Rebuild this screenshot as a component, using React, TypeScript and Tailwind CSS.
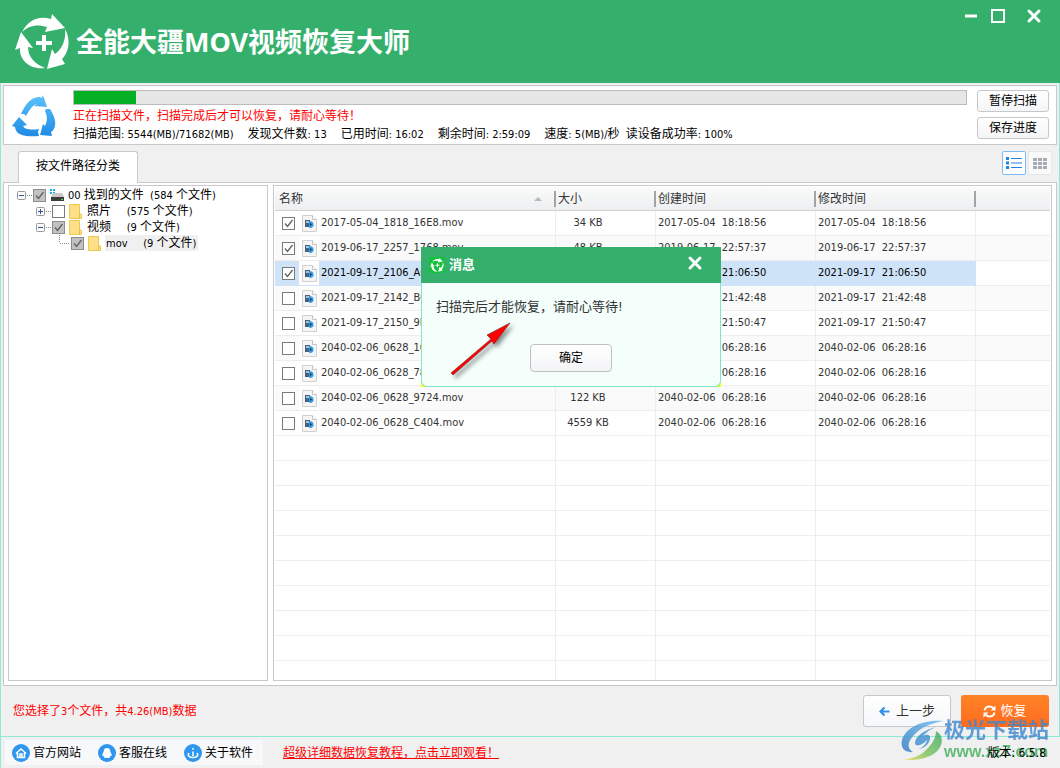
import React, { useState } from "react";
import clsx from "clsx";

type FileRow = {
  name: string;
  size: string;
  created: string;
  modified: string;
  checked: boolean;
  active?: boolean;
};

const files: FileRow[] = [
  { name: "2017-05-04_1818_16E8.mov", size: "34 KB", created: "2017-05-04  18:18:56", modified: "2017-05-04  18:18:56", checked: true },
  { name: "2019-06-17_2257_1768.mov", size: "48 KB", created: "2019-06-17  22:57:37", modified: "2019-06-17  22:57:37", checked: true },
  { name: "2021-09-17_2106_A6D0.mov", size: "4286 KB", created: "2021-09-17  21:06:50", modified: "2021-09-17  21:06:50", checked: true, active: true },
  { name: "2021-09-17_2142_BC20.mov", size: "512 KB", created: "2021-09-17  21:42:48", modified: "2021-09-17  21:42:48", checked: false },
  { name: "2021-09-17_2150_9F14.mov", size: "730 KB", created: "2021-09-17  21:50:47", modified: "2021-09-17  21:50:47", checked: false },
  { name: "2040-02-06_0628_16A4.mov", size: "96 KB", created: "2040-02-06  06:28:16", modified: "2040-02-06  06:28:16", checked: false },
  { name: "2040-02-06_0628_78B2.mov", size: "215 KB", created: "2040-02-06  06:28:16", modified: "2040-02-06  06:28:16", checked: false },
  { name: "2040-02-06_0628_9724.mov", size: "122 KB", created: "2040-02-06  06:28:16", modified: "2040-02-06  06:28:16", checked: false },
  { name: "2040-02-06_0628_C404.mov", size: "4559 KB", created: "2040-02-06  06:28:16", modified: "2040-02-06  06:28:16", checked: false },
];

const emptyRows = Array.from({ length: 10 }, (_, i) => i);

const stats = [
  "扫描范围: 5544(MB)/71682(MB)",
  "发现文件数: 13",
  "已用时间: 16:02",
  "剩余时间: 2:59:09",
  "速度: 5(MB)/秒  读设备成功率: 100%",
];

export default function App() {
  const [open, setOpen] = useState(true);

  return (
    <div className="relative flex h-screen flex-col overflow-hidden bg-[#f0f0f0] font-['DejaVu_Sans_Condensed','Noto_Sans_CJK_SC',sans-serif] text-xs text-black">
      <TitleBar />
      <div className="flex min-h-0 flex-1 flex-col border-x border-[#8ee9d5] px-[2px] pt-[2px]">
        <ScanStatus />
        <Tabs />
        <main className="flex min-h-0 flex-1 gap-[5px] border border-[#c8c8cc] bg-white px-1 pt-[2px] pb-1">
          <FileTree />
          <FileTable />
        </main>
        <ActionBar />
      </div>
      <Footer />
      <Watermark />
      {open && <MessageDialog onClose={() => setOpen(false)} />}
    </div>
  );
}

// Latin runs are set one pixel smaller than the Chinese around them
function Mixed({ text }: { text: string }) {
  return (
    <>
      {text.split(/([\u4e00-\u9fff，！]+)/).map((part, i) =>
        i % 2 === 1 ? (
          part
        ) : (
          <span key={i} className="text-[11px]">
            {part}
          </span>
        )
      )}
    </>
  );
}

function TitleBar() {
  return (
    <header className="flex h-[83px] shrink-0 justify-between bg-[#34b06c] text-white">
      <div className="flex items-center gap-[6px] pl-[14px]">
        <CycleLogo className="size-14" />
        <h1 className="text-[27px] leading-8 font-bold font-['Noto_Sans','Noto_Sans_CJK_SC',sans-serif]">
          全能大疆MOV视频恢复大师
        </h1>
      </div>
      <div className="flex h-8 items-center gap-3 pr-[18px]">
        <button aria-label="最小化">
          <svg className="h-4 w-[14px]" viewBox="0 0 14 16">
            <path d="M1 8h12" stroke="#fff" strokeWidth="3" />
          </svg>
        </button>
        <button aria-label="最大化">
          <svg className="h-4 w-4" viewBox="0 0 16 16" fill="none">
            <path d="M2 2h12v12H2z" stroke="#fff" strokeWidth="2" />
          </svg>
        </button>
        <button aria-label="关闭" className="ml-2">
          <Cross className="size-4" />
        </button>
      </div>
    </header>
  );
}

function ScanStatus() {
  return (
    <section className="flex h-[60px] shrink-0 border border-[#c8c8cc] bg-white">
      <div className="w-[69px] shrink-0 pt-2 pl-2">
        <RecycleIcon />
      </div>
      <div className="min-w-0 flex-1 pt-1">
        <div
          role="progressbar"
          aria-label="扫描进度"
          aria-valuenow={7}
          className="h-[15px] border border-[#bcbcbc] bg-[#e6e6e6]"
        >
          <div className="h-full bg-[#06b025]" style={{ width: "6.9%" }} />
        </div>
        <p className="mt-[3px] leading-[17px] text-[#f00]">
          正在扫描文件，扫描完成后才可以恢复，请耐心等待！
        </p>
        <div className="flex gap-[14px] leading-[18px] whitespace-pre">
          {stats.map((item) => (
            <span key={item}>
              <Mixed text={item} />
            </span>
          ))}
        </div>
      </div>
      <div className="flex w-[89px] shrink-0 flex-col gap-[5px] pt-1 pr-[7px] pl-[10px]">
        <SmallButton>暂停扫描</SmallButton>
        <SmallButton>保存进度</SmallButton>
      </div>
    </section>
  );
}

function SmallButton({ children }: { children: React.ReactNode }) {
  return (
    <button className="h-[22px] rounded-[3px] border border-[#c8c8cc] bg-linear-to-b from-white to-[#f4f5f7] leading-5">
      {children}
    </button>
  );
}

function Tabs() {
  return (
    <div className="flex h-[37px] shrink-0 items-end justify-between pl-[15px]">
      <button className="relative -mb-px h-8 w-[120px] rounded-t-[3px] border border-b-0 border-[#c8c8cc] bg-white pb-1">
        按文件路径分类
      </button>
      <div className="mb-[7px] flex gap-[2px] pr-[5px]">
        <button aria-label="列表" className="grid size-6 place-items-center rounded-xs border border-[#7cbcf5] bg-white">
          <svg className="h-3 w-4" viewBox="0 0 16 12">
            <g fill="#1f86e0">
              <path d="M0 0h3v3H0zM0 4.5h3v3H0zM0 9h3v3H0z" />
              <path d="M5 1h11v1H5zM5 5.5h11v1H5zM5 10h11v1H5z" />
            </g>
          </svg>
        </button>
        <button aria-label="图标" className="grid size-6 place-items-center rounded-xs border border-[#e8e8ea] bg-[#fafafa]">
          <svg className="h-[11px] w-[14px]" viewBox="0 0 14 11">
            <path fill="#a6aab4" d="M0 0h4v3H0zM5 0h4v3H5zM10 0h4v3h-4zM0 4h4v3H0zM5 4h4v3H5zM10 4h4v3h-4zM0 8h4v3H0zM5 8h4v3H5zM10 8h4v3h-4z" />
          </svg>
        </button>
      </div>
    </div>
  );
}

function FileTree() {
  return (
    <aside className="w-[260px] shrink-0 border border-[#c8c8cc] bg-white pt-px pl-2">
      <ul className="leading-4 whitespace-pre">
        <TreeRow expander="minus" checked icon={<DriveIcon />} label="00 找到的文件  (584 个文件)" />
        <li className="pl-[19px]">
          <ul>
            <TreeRow expander="plus" icon={<FolderIcon />} label="照片     (575 个文件)" />
            <TreeRow expander="minus" checked icon={<FolderIcon />} label="视频     (9 个文件)" />
            <li className="pl-[19px]">
              <ul>
                <TreeRow checked selected icon={<FolderIcon />} label="mov     (9 个文件)" />
              </ul>
            </li>
          </ul>
        </li>
      </ul>
    </aside>
  );
}

type TreeRowProps = {
  expander?: "plus" | "minus";
  checked?: boolean;
  selected?: boolean;
  icon: React.ReactNode;
  label: string;
};

function TreeRow({ expander, checked, selected, icon, label }: TreeRowProps) {
  return (
    <li className="flex h-4 items-center">
      {expander ? (
        <button aria-label={expander === "plus" ? "展开" : "折叠"} className="mr-px flex w-[15px] items-center">
          <svg className="h-[9px] w-[15px]" viewBox="0 0 15 9" fill="none">
            <rect x=".5" y=".5" width="8" height="8" rx="1" fill="#fafafa" stroke="#999" />
            <path d="M2 4.5h5" stroke="#36549c" />
            {expander === "plus" && <path d="M4.5 2v5" stroke="#36549c" />}
            <path d="M10 4.5h5" stroke="#888" strokeDasharray="1 1" />
          </svg>
        </button>
      ) : (
        <svg className="mr-px h-4 w-[15px]" viewBox="0 0 15 16" fill="none">
          <path d="M4.5 0v8M5 8.5h10" stroke="#888" strokeDasharray="1 1" />
        </svg>
      )}
      <label className="flex h-4 items-center">
        <CheckBox defaultChecked={checked} filled />
        <span className="flex w-[21px] shrink-0 items-center justify-center">{icon}</span>
        <span className={clsx("h-4 pr-[2px] pl-px", selected && "bg-[#f0f0f0]")}>
          <Mixed text={label} />
        </span>
      </label>
    </li>
  );
}

function CheckBox({ filled, ...props }: { filled?: boolean; defaultChecked?: boolean; "aria-label"?: string }) {
  return (
    <span className="grid size-[13px] shrink-0">
      <input
        type="checkbox"
        className={clsx(
          "peer col-start-1 row-start-1 size-[13px] appearance-none border border-[#7a7a7a] bg-white",
          filled && "checked:border-[#8c8c8c] checked:bg-[#c2c2c2]"
        )}
        {...props}
      />
      <svg
        className="pointer-events-none invisible col-start-1 row-start-1 size-[13px] peer-checked:visible"
        viewBox="0 0 13 13"
        fill="none"
      >
        <path d="M3 6.5l2.5 3L10.5 3" stroke="#606060" strokeWidth="1.3" />
      </svg>
    </span>
  );
}

function FileTable() {
  const head = "border-b border-[#d0d0d4] text-left font-normal";
  return (
    <section className="min-w-0 flex-1 overflow-hidden border border-[#c8c8cc] bg-white p-px">
      <table className="w-full table-fixed border-separate border-spacing-0">
        <colgroup>
          <col className="w-[281px]" />
          <col className="w-[100px]" />
          <col className="w-[160px]" />
          <col className="w-[160px]" />
          <col />
        </colgroup>
        <thead>
          <tr className="h-6 bg-linear-to-b from-[#fafafa] to-[#eceef0] text-[#333]">
            <th className={clsx(head, "pl-1")}>
              <span className="flex items-center justify-between">
                名称
                <span className="flex items-center gap-3">
                  <svg className="h-1 w-2" viewBox="0 0 8 4">
                    <path d="M0 4L4 0l4 4z" fill="#b8b8b8" />
                  </svg>
                  <Divider />
                </span>
              </span>
            </th>
            {["大小", "创建时间", "修改时间"].map((title) => (
              <th key={title} className={clsx(head, "pl-[2px]")}>
                <span className="flex items-center justify-between">
                  {title}
                  <Divider />
                </span>
              </th>
            ))}
            <th className={head} aria-label="其他" />
          </tr>
        </thead>
        <tbody className="text-[11px] text-[#333]">
          {files.map((file, i) => (
            <tr
              key={file.name}
              className={clsx(
                "h-[25px] whitespace-pre",
                file.active ? "text-black" : i % 2 === 1 && "bg-[#fafafa]"
              )}
            >
              <Cell active={file.active}>
                <label className="flex h-6 items-center pl-[5px]">
                  <CheckBox defaultChecked={file.checked} />
                  <span className="mr-[2px] ml-1 grid h-6 w-5 place-items-center bg-white">
                    <MovIcon />
                  </span>
                  {file.name}
                </label>
              </Cell>
              <Cell active={file.active}>
                <div className="w-[60px] text-center">{file.size}</div>
              </Cell>
              <Cell active={file.active}>{file.created}</Cell>
              <Cell active={file.active}>{file.modified}</Cell>
              <Cell />
            </tr>
          ))}
          {emptyRows.map((row) => (
            <tr key={row} className="h-[25px]">
              <Cell />
              <Cell />
              <Cell />
              <Cell />
              <Cell />
            </tr>
          ))}
        </tbody>
      </table>
    </section>
  );
}

function Cell({ active, children }: { active?: boolean; children?: React.ReactNode }) {
  return (
    <td
      className={clsx(
        "border-b pl-[2px] not-last:border-r",
        active ? "border-[#cfe3f8] bg-[#cfe3f8]" : "border-[#ededed]"
      )}
    >
      {children}
    </td>
  );
}

function Divider() {
  return <span className="h-4 w-[2px] shrink-0 bg-[#a4a4a8]" />;
}

function ActionBar() {
  return (
    <div className="flex h-[50px] shrink-0 items-center justify-between pr-2 pl-[10px]">
      <p className="text-[#f00]">
        <Mixed text="您选择了3个文件，共4.26(MB)数据" />
      </p>
      <div className="flex gap-[10px] text-[13px]">
        <button className="flex h-8 w-[88px] items-center justify-center gap-[6px] rounded-[3px] border border-[#c8c8cc] bg-linear-to-b from-white to-[#f6f7f9] text-[#333]">
          <svg className="size-[11px]" viewBox="0 0 11 11" fill="none">
            <path d="M10.5 5.5H2M5.5 1.5l-4 4 4 4" stroke="#2f8fec" strokeWidth="2.2" />
          </svg>
          上一步
        </button>
        <button className="flex h-8 w-[88px] items-center justify-center gap-1 rounded-[3px] bg-linear-to-b from-[#ff8326] to-[#ff6a1f] text-white">
          <svg className="size-[13px]" viewBox="0 0 13 13" fill="none" stroke="#fff" strokeWidth="2">
            <path d="M1.5 5.5C2 3 4 1.5 6.5 1.5c1.6 0 2.8.6 3.8 1.7M11.5 7.5c-.5 2.5-2.5 4-5 4-1.6 0-2.8-.6-3.800-1.700" />
            <path d="M12.5.5v5h-5zM.5 12.5v-5h5z" fill="#fff" stroke="none" />
          </svg>
          恢复
        </button>
      </div>
    </div>
  );
}

function Footer() {
  return (
    <footer className="flex h-8 shrink-0 items-center border-t border-l border-[#8ee9d5]">
      <nav className="ml-1 flex h-[25px] w-[258px] items-center gap-4 bg-[#f6f8fa] pl-[7px]">
        <FooterLink label="官方网站">
          <path d="M4 9.5L9 5l5 4.5M5.5 9v4.5h7V9M8 13.5V10h2v3.5" />
        </FooterLink>
        <FooterLink label="客服在线">
          <path
            d="M9 4c-2.400 0-3.300 1.700-3.300 3.500L4.300 10.500c-.3 1 .1 1.500.9.900.2.700.6 1.200 1.100 1.600-.4.500 0 1 .9 1L9 13.700l1.800.3c.9 0 1.300-.5.9-1 .5-.4.900-.9 1.100-1.600.8.6 1.200.1.900-.9l-1.400-3C12.300 5.700 11.400 4 9 4z"
            fill="#fff"
            stroke="none"
          />
        </FooterLink>
        <FooterLink label="关于软件">
          <path d="M9 7.5V12M9 4v1.800M5 9c-2 2.500.5 4.500 4 4.500s6-2 4-4.500" />
        </FooterLink>
      </nav>
      <a href="#tutorial" className="ml-5 text-[#f00] underline">
        超级详细数据恢复教程，点击立即观看！
      </a>
      <span className="relative z-10 ml-auto pr-[14px]">版本: 6.5.8</span>
    </footer>
  );
}

function FooterLink({ label, children }: { label: string; children: React.ReactNode }) {
  return (
    <a href="#link" className="flex items-center gap-[3px] pr-px">
      <svg className="size-[18px]" viewBox="0 0 18 18" fill="none" stroke="#fff" strokeWidth="1.5">
        <circle cx="9" cy="9" r="9" fill="#2f96ee" stroke="none" />
        {children}
      </svg>
      {label}
    </a>
  );
}

function MessageDialog({ onClose }: { onClose: () => void }) {
  return (
    <div
      role="dialog"
      aria-label="消息"
      className="absolute top-[247px] left-[421px] z-20 flex h-[140px] w-[300px] flex-col bg-[#ff0]"
    >
      <div className="flex h-9 items-center bg-[#34b06c] pr-[18px] pl-2 text-white">
        <span className="grid size-4 place-items-center rounded-xs bg-[#14c13c]">
          <CycleLogo className="size-[14px]" />
        </span>
        <h2 className="ml-1 text-[13px] font-bold">消息</h2>
        <button aria-label="关闭" className="mb-1 ml-auto" onClick={onClose}>
          <Cross className="size-4" />
        </button>
      </div>
      <div className="flex flex-1 flex-col items-center rounded-b-md border border-t-0 border-[#7fe6cc] bg-[#f4fffb] pt-[14px]">
        <p className="w-full pl-[14px] text-[13px] leading-5 text-[#333]">
          扫描完后才能恢复，请耐心等待!
        </p>
        <button
          onClick={onClose}
          className="mt-[27px] h-7 w-[82px] rounded border border-[#c0c0c4] bg-linear-to-b from-white to-[#f3f4f6]"
        >
          确定
        </button>
      </div>
      <svg className="pointer-events-none absolute top-[72px] left-[26px] h-16 w-[74px]" viewBox="0 0 74 64">
        <g className="drop-shadow-[3px_3px_2px_rgba(0,0,0,0.45)]">
          <path d="M4 54L44 20 40 16 63 4 47 25 45 22 6 56z" fill="#f00" stroke="#803030" strokeWidth=".7" />
        </g>
      </svg>
    </div>
  );
}

function Watermark() {
  return (
    <div className="pointer-events-none absolute right-[11px] bottom-[6px] flex items-center opacity-80">
      <svg className="h-11 w-[43px]" viewBox="0 0 43 44">
        <defs>
          <linearGradient id="swirl" x1="1" y1="0" x2="0" y2="1">
            <stop offset="0" stopColor="#69bdf0" />
            <stop offset="1" stopColor="#2d78c4" />
          </linearGradient>
          <linearGradient id="leaf" x1="1" y1="0" x2="0" y2="1">
            <stop offset="0" stopColor="#35a965" />
            <stop offset=".6" stopColor="#7cc35a" />
            <stop offset="1" stopColor="#f2dc4c" />
          </linearGradient>
        </defs>
        <path d="M43 3C25 1 5 8 1 22c-2 8 3 13 11 12-6-3-6-10 1-17C20 9 31 5 43 3z" fill="url(#swirl)" />
        <path d="M35 9C24 12 14 18 14 25c0 4 7 3 12-3-1 5-5 8-9 9 5 0 11-4 12-10 1-5-4-5-7-3 3-4 8-7 13-9z" fill="#3d8fd0" />
        <path d="M35 13c8 4 8 15-1 22C25 42 12 42 3 42c10-2 18-5 23-11 5-5 9-11 9-18z" fill="url(#leaf)" />
      </svg>
      <div className="font-['Liberation_Sans','Noto_Sans_CJK_SC',sans-serif] font-bold">
        <div className="text-[21px] leading-6 text-[#3f87cc]">极光下载站</div>
        <div className="text-base leading-5 text-[#3fae5c]">www.xz7.com</div>
      </div>
    </div>
  );
}

function Cross({ className }: { className: string }) {
  return (
    <svg className={className} viewBox="0 0 16 16" fill="none">
      <path d="M3 3l10 10M13 3L3 13" stroke="#fff" strokeWidth="3" strokeLinecap="round" />
    </svg>
  );
}

function CycleLogo({ className }: { className: string }) {
  return (
    <svg className={className} viewBox="0 0 56 56" fill="#fff">
      <path d="M8 18C14 6 25 1 37 5l1-5 13 14-20 4 2-5C24 10 15 11 8 18z" />
      <path d="M51 15c6 11 4 23-3 30l3 5-18 5 5-20 3 5c8-6 11-15 10-25z" />
      <path d="M7 18l12 16-5-1c0 10 7 17 17 21C16 56 5 46 6 34l-5 2z" />
      <path d="M28 21h4v6h6v4h-6v6h-4v-6h-6v-4h6z" />
    </svg>
  );
}

function RecycleIcon() {
  return (
    <svg className="h-[43px] w-11" viewBox="0 0 44 43">
      <defs>
        <linearGradient id="cycle" gradientUnits="userSpaceOnUse" x1="0" y1="0" x2="0" y2="42">
          <stop offset="0" stopColor="#5cc4fa" />
          <stop offset="1" stopColor="#218be6" />
        </linearGradient>
      </defs>
      <g fill="url(#cycle)">
        <path d="M9 20C13 11 18 4 26 3c2 0 3 0 4 1l1-3 4 12-13-1 3-2c-5 1-8 7-11 12l-2-2z" />
        <path d="M33 17l1-2h4c4 6 6 12 5 17-1 3-2 5-4 6l1 4-12-1 3-11 2 2c2-4 3-9 0-15z" />
        <path d="M7 23l8 8-4 1c2 4 8 4 16 3l-1 3 1 4C14 43 4 42 3 33l-3-1z" />
      </g>
    </svg>
  );
}

function DriveIcon() {
  return (
    <svg className="h-[14px] w-4" viewBox="0 0 16 14">
      <path d="M1 1h2v2H1zM4 1h2v2H4zM1 4h2v2H1zM4 4h2v2H4z" fill="#16b2ea" />
      <path d="M4 5h9l2 4H2z" fill="#c8c8c8" />
      <path d="M2 9h13v4H2z" fill="#3c3c3c" />
      <path d="M12 11h2v1h-2z" fill="#4be04b" />
    </svg>
  );
}

function FolderIcon() {
  return (
    <svg className="h-[15px] w-[13px]" viewBox="0 0 13 15">
      <path d="M.5.5h10V10h2v4.5H.5z" fill="#ffe08a" stroke="#f0c850" />
      <path d="M10.5 10v4.5" stroke="#e8bc40" />
    </svg>
  );
}

function MovIcon() {
  return (
    <svg className="h-[17px] w-[15px]" viewBox="0 0 15 17">
      <path d="M.5.5h10l4 4v12H.5z" fill="#f5f5f5" stroke="#d0d0d0" />
      <path d="M10.5.5v4h4" fill="#fff" stroke="#c4c4c4" />
      <path d="M3 5h5v7H3z" fill="#48607a" />
      <path d="M4 6h3v2H4z" fill="#a8c4dc" />
      <path d="M7 6.5c3-1 5 1 4.500 4-.5 2-3 3-4.500 2z" fill="#2f9be4" />
      <path d="M8 8l2 1.500L8 11z" fill="#17324c" />
    </svg>
  );
}
